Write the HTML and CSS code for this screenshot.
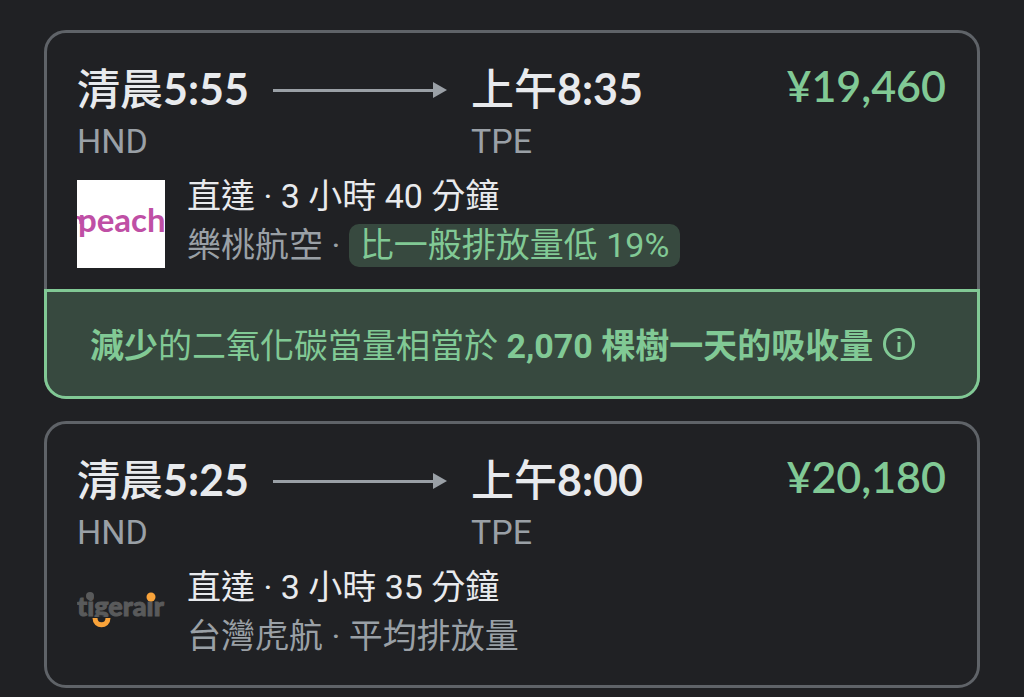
FILE: index.html
```
<!DOCTYPE html>
<html lang="zh-Hant">
<head>
  <meta charset="UTF-8">
  <meta name="viewport" content="width=device-width, initial-scale=1.0">
  <title>航班</title>
  <link rel="stylesheet" href="styles.css">
</head>
<body>
  <main class="flights">
    <article class="card">
      <div class="card-body">
        <div class="route">
          <div class="stop">
            <div class="time">清晨<span class="clock">5:55</span></div>
            <div class="airport">HND</div>
          </div>
          <div class="arrow"></div>
          <div class="stop">
            <div class="time">上午<span class="clock">8:35</span></div>
            <div class="airport">TPE</div>
          </div>
          <div class="price">¥19,460</div>
        </div>
        <div class="info">
          <svg class="logo" viewBox="0 0 88 88">
            <rect width="88" height="88" fill="#fff"/>
            <path d="M0 37.5 C3 37 4 40 4 44" fill="none" stroke="#bf4fa5" stroke-width="3"/>
            <text class="peach" x="1" y="52">peach</text>
          </svg>
          <div class="details">
            <div class="duration">直達 · 3 小時 40 分鐘</div>
            <div class="airline">樂桃航空 · <span class="badge">比一般排放量低 19%</span></div>
          </div>
        </div>
      </div>
      <div class="eco">
        <p><b>減少</b>的二氧化碳當量相當於 <b>2,070 棵樹一天的吸收量</b></p>
        <button class="eco-button" type="button" aria-label="詳細資訊">
          <svg viewBox="0 0 32 32">
            <circle cx="16" cy="16" r="14.5" fill="none" stroke="currentColor" stroke-width="3"/>
            <path d="M14.5 14h3v10h-3zM14.5 8h3v3h-3z" fill="currentColor"/>
          </svg>
        </button>
      </div>
    </article>

    <article class="card">
      <div class="card-body">
        <div class="route">
          <div class="stop">
            <div class="time">清晨<span class="clock">5:25</span></div>
            <div class="airport">HND</div>
          </div>
          <div class="arrow"></div>
          <div class="stop">
            <div class="time">上午<span class="clock">8:00</span></div>
            <div class="airport">TPE</div>
          </div>
          <div class="price">¥20,180</div>
        </div>
        <div class="info">
          <svg class="logo" viewBox="0 0 88 88">
            <text class="tiger" x="0" y="45">tigerair</text>
            <path d="M12 46h24v12h-24z" fill="#202124"/>
            <path d="M18 47 C18 56 31 56 31 47" fill="none" stroke="#f9a33a" stroke-width="5"/>
            <circle cx="13" cy="25" r="4" fill="#595a5b"/>
            <circle cx="74" cy="26" r="4.5" fill="#f9a33a"/>
          </svg>
          <div class="details">
            <div class="duration">直達 · 3 小時 35 分鐘</div>
            <div class="airline">台灣虎航 · 平均排放量</div>
          </div>
        </div>
      </div>
    </article>
  </main>
</body>
</html>
```
FILE: styles.css
```
* {
  box-sizing: border-box;
  margin: 0;
  padding: 0;
}

body {
  background-color: #202124;
  color: #e8eaed;
  font-family: Roboto, "Noto Sans CJK TC", sans-serif;
  font-size: 34px;
}

.flights {
  display: flex;
  flex-direction: column;
  gap: 22px;
  padding: 30px 44px 8px;
}

.card {
  border: 3px solid #5f6368;
  border-radius: 22px;
}

.card-body {
  padding: 30px 31px 19px 30px;
}

.card-body:last-child {
  padding-bottom: 24px;
}

.route {
  display: grid;
  grid-template-columns: minmax(172px, auto) 174px 1fr auto;
  column-gap: 24px;
}

.time,
.price {
  font-family: Lato, "Noto Sans CJK TC", sans-serif;
  font-size: 43px;
  font-weight: 500;
  line-height: 52px;
  white-space: nowrap;
}

.clock {
  font-weight: 700;
}

.price {
  color: #81c995;
  font-weight: 600;
  line-height: 46px;
}

.airport {
  color: #9aa0a6;
  line-height: 52px;
}

.arrow {
  display: flex;
  align-items: center;
  height: 54px;
}

.arrow::before {
  content: "";
  flex: 1;
  height: 3px;
  background-color: #9aa0a6;
}

.arrow::after {
  content: "";
  border-left: 14px solid #9aa0a6;
  border-top: 8px solid transparent;
  border-bottom: 8px solid transparent;
}

.info {
  display: flex;
  gap: 22px;
  padding-top: 5px;
}

.logo {
  flex: none;
  width: 88px;
  height: 88px;
  margin-top: 8px;
}

.peach {
  font-family: Lato, sans-serif;
  font-size: 33px;
  font-weight: 700;
  fill: #bf4fa5;
}

.tiger {
  font-family: Lato, sans-serif;
  font-size: 27px;
  font-weight: 900;
  font-variant-ligatures: none;
  fill: #595a5b;
  stroke: #595a5b;
}

.duration,
.airline {
  line-height: 49px;
}

.airline {
  color: #9aa0a6;
}

.badge {
  display: inline-block;
  padding: 0 11px;
  border-radius: 10px;
  background-color: #37493f;
  color: #81c995;
  line-height: 43px;
}

.eco {
  display: flex;
  align-items: center;
  gap: 10px;
  margin: 0 -3px -3px;
  padding: 28px 43px;
  border: 3px solid #81c995;
  border-radius: 0 0 22px 22px;
  background-color: #37493f;
  color: #81c995;
}

.eco p {
  padding-top: 4px;
  line-height: 44px;
}

.eco-button {
  width: 32px;
  height: 32px;
  border: none;
  background: none;
  color: inherit;
  cursor: pointer;
}

.eco-button svg {
  display: block;
}
```
